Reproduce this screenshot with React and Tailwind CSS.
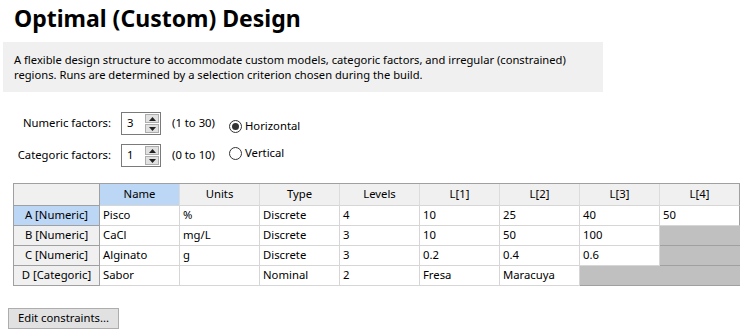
import React from "react";

const font = { fontFamily: '"Noto Sans", "Open Sans", sans-serif' };

function Spinner({ value }) {
  return (
    <div className="flex h-[23px] w-[40px] border border-[#7a7a7a] bg-white">
      <div className="flex flex-1 items-center pl-[5px] text-[11.3px] text-black">{value}</div>
      <div className="flex w-[15px] flex-col gap-[1px] py-[1px] pr-[1px]">
        <div className="flex flex-1 items-center justify-center border border-[#adadad] bg-[#e1e1e1]">
          <svg width="7" height="4" viewBox="0 0 7 4"><path d="M0 4 L3.5 0 L7 4 Z" fill="#222" /></svg>
        </div>
        <div className="flex flex-1 items-center justify-center border border-[#adadad] bg-[#e1e1e1]">
          <svg width="7" height="4" viewBox="0 0 7 4"><path d="M0 0 L3.5 4 L7 0 Z" fill="#222" /></svg>
        </div>
      </div>
    </div>
  );
}

function Radio({ checked, label }) {
  return (
    <div className="flex items-center gap-[3px] text-[11.3px] text-black">
      <div className="flex h-[13px] w-[13px] items-center justify-center rounded-full border border-[#333] bg-white">
        {checked && <div className="h-[7px] w-[7px] rounded-full bg-[#333]" />}
      </div>
      <span>{label}</span>
    </div>
  );
}

const headers = ["Name", "Units", "Type", "Levels", "L[1]", "L[2]", "L[3]", "L[4]"];
const rows = [
  { h: "A [Numeric]", cells: ["Pisco", "%", "Discrete", "4", "10", "25", "40", "50"], sel: true },
  { h: "B [Numeric]", cells: ["CaCl", "mg/L", "Discrete", "3", "10", "50", "100", null] },
  { h: "C [Numeric]", cells: ["Alginato", "g", "Discrete", "3", "0.2", "0.4", "0.6", null] },
  { h: "D [Categoric]", cells: ["Sabor", "", "Nominal", "2", "Fresa", "Maracuya", null, null] },
];

export default function App() {
  return (
    <div className="h-[330px] w-[748px] overflow-hidden bg-white text-black" style={font}>
      <div className="h-[42px] pl-[14px] pt-[3px] text-[23px] font-bold leading-[30px]">
        Optimal (Custom) Design
      </div>
      <div className="ml-[3px] h-[50px] w-[600px] bg-[#f0f0f0] px-[11px] pt-[10px] text-[11.2px] leading-[15px]">
        A flexible design structure to accommodate custom models, categoric factors, and irregular (constrained)
        <br />
        regions. Runs are determined by a selection criterion chosen during the build.
      </div>
      <div className="mt-[20px] flex">
        <div className="flex flex-col gap-[9px]">
          <div className="flex items-center">
            <div className="w-[111px] text-right text-[11.3px]">Numeric factors:</div>
            <div className="ml-[10px]"><Spinner value="3" /></div>
            <div className="ml-[11px] w-[57px] text-[11.3px]">(1 to 30)</div>
          </div>
          <div className="flex items-center">
            <div className="w-[111px] text-right text-[11.3px]">Categoric factors:</div>
            <div className="ml-[10px]"><Spinner value="1" /></div>
            <div className="ml-[11px] w-[57px] text-[11.3px]">(0 to 10)</div>
          </div>
        </div>
        <div className="mt-[6px] flex flex-col gap-[10px]">
          <Radio checked label="Horizontal" />
          <Radio label="Vertical" />
        </div>
      </div>
      <div className="ml-[13px] mt-[16px] grid w-[727px] grid-cols-[86px_repeat(8,80px)] border-l border-t border-[#a0a0a0] text-[11.3px]">
        <div className="h-[22px] border-b border-r border-b-[#a0a0a0] border-r-[#a0a0a0] bg-[#f0f0f0]" />
        {headers.map((h, i) => (
          <div
            key={h}
            className={
              "flex h-[22px] items-center justify-center border-b border-r border-b-[#d6d6d6] " +
              (i === 7 ? "border-r-[#a0a0a0] " : "border-r-[#dcdcdc] ") +
              (i === 0 ? "bg-[#bcd6f6]" : "bg-[#f0f0f0]")
            }
          >
            {h}
          </div>
        ))}
        {rows.map((r) => (
          <React.Fragment key={r.h}>
            <div
              className={
                "flex h-[20px] items-center justify-center border-b border-r border-b-[#a0a0a0] border-r-[#a0a0a0] " +
                (r.sel ? "bg-[#bcd6f6]" : "bg-[#f0f0f0]")
              }
            >
              {r.h}
            </div>
            {r.cells.map((c, i) =>
              c === null ? (
                <div key={i} className="h-[20px] border-b border-b-[#a0a0a0] bg-[#c0c0c0]" />
              ) : (
                <div
                  key={i}
                  className={
                    "flex h-[20px] items-center border-b border-r border-b-[#d6d6d6] bg-white pl-[3px] " +
                    (i === 7 ? "border-r-[#a0a0a0]" : "border-r-[#d6d6d6]")
                  }
                >
                  {c}
                </div>
              )
            )}
          </React.Fragment>
        ))}
      </div>
      <div className="ml-[8px] mt-[22px] flex h-[21px] w-[111px] items-center justify-center border border-[#adadad] bg-[#e1e1e1] text-[11.3px]">
        Edit constraints...
      </div>
    </div>
  );
}
